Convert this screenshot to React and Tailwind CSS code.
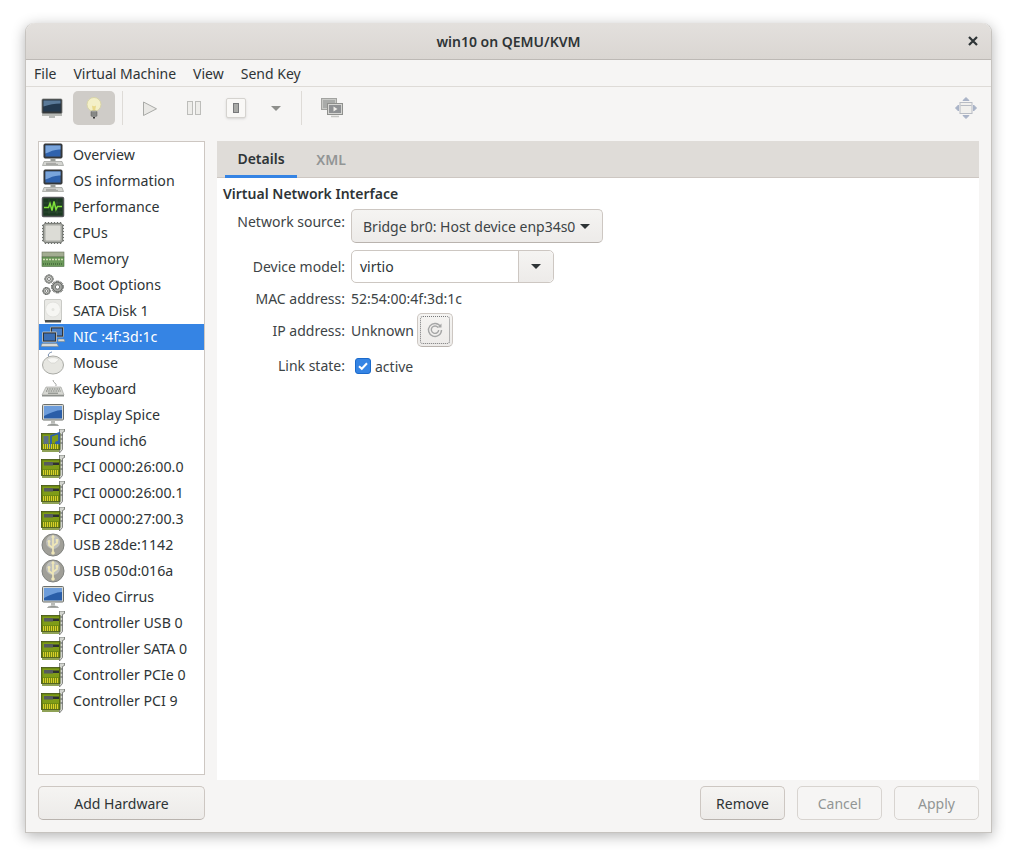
import React from "react";

const FONT = "font-['Noto_Sans','Open_Sans',sans-serif]";

// --- device icons, all drawn on a 24x24 box ---
function MonitorIcon({ stand = "#d5d6d2", screen = "#2f62ad" }) {
  return (
    <svg width="24" height="24" viewBox="0 0 24 24">
      <rect x="3" y="1" width="18" height="14" rx="1" fill="#3d4144" stroke="#2c2f31" />
      <rect x="4.5" y="2.5" width="15" height="11" fill={screen} />
      <path d="M4.5 2.5h15v4C14 6 9.5 8.5 4.5 10.5z" fill="#7aa5dc" />
      <rect x="9.5" y="15.5" width="5" height="2.5" fill="#9a9d99" />
      <path d="M3 18.5h18l1.5 4h-21z" fill={stand} stroke="#8b8e8a" strokeWidth="0.6" />
      <path d="M5 20.3h10M5 21.4h12" stroke="#7d807c" strokeWidth="0.6" />
    </svg>
  );
}

function DisplayIcon() {
  return (
    <svg width="24" height="24" viewBox="0 0 24 24">
      <rect x="1.5" y="1.5" width="21" height="15.5" rx="1" fill="#d6d8d4" stroke="#6d706c" />
      <rect x="3" y="3" width="18" height="12.5" fill="#2a5ea8" />
      <path d="M3 3h18v4C15 7 9 10 3 13z" fill="#6d9ddb" />
      <rect x="10" y="17" width="4" height="3.5" fill="#b9bbb7" />
      <path d="M6.5 22.5c1-2 10-2 11 0z" fill="#9fa29e" stroke="#7d807c" strokeWidth="0.5" />
    </svg>
  );
}

function PerfIcon() {
  return (
    <svg width="24" height="24" viewBox="0 0 24 24">
      <rect x="1.5" y="2.5" width="21" height="19" rx="1" fill="#1c3a22" stroke="#55585a" strokeWidth="1.5" />
      <path d="M3 8h18M3 17h18M8 4v15M16 4v15" stroke="#3c5a42" strokeWidth="0.5" />
      <path d="M3 12.5h4.5l1.5-4 2 7 2-9 2 8 1.5-3h4.5" fill="none" stroke="#7fe03a" strokeWidth="1.5" />
    </svg>
  );
}

function CpuIcon() {
  const pins = [5, 8, 11, 14, 17, 20];
  return (
    <svg width="24" height="24" viewBox="0 0 24 24">
      {pins.map((p) => (
        <g key={p} stroke="#6c6f6b" strokeWidth="1.4">
          <path d={`M${p - 0.5} 1v3`} />
          <path d={`M${p - 0.5} 20v3`} />
          <path d={`M1 ${p - 0.5}h3`} />
          <path d={`M20 ${p - 0.5}h3`} />
        </g>
      ))}
      <rect x="2.5" y="2.5" width="19" height="19" rx="2" fill="#a8aaa4" stroke="#7c7f7a" />
      <rect x="4.5" y="4.5" width="15" height="15" rx="1" fill="#dcdcd6" />
    </svg>
  );
}

function MemoryIcon() {
  return (
    <svg width="24" height="24" viewBox="0 0 24 24">
      <rect x="1" y="5" width="22" height="5" fill="#a3ad92" stroke="#6d7560" strokeWidth="0.6" />
      <rect x="1" y="10" width="22" height="9.5" fill="#6c9a5a" stroke="#4c6b41" strokeWidth="0.6" />
      <path d="M2 12.5h20" stroke="#d2dfb8" strokeWidth="1.6" strokeDasharray="2 1" />
      <path d="M2 17h20" stroke="#2f4d2a" strokeWidth="1.2" strokeDasharray="1 1" />
    </svg>
  );
}

function Gear({ cx, cy, r, fill }) {
  const teeth = [0, 45, 90, 135];
  return (
    <g>
      {teeth.map((a) => (
        <rect
          key={a}
          x={cx - r * 0.32}
          y={cy - r * 1.25}
          width={r * 0.64}
          height={r * 2.5}
          fill={fill}
          stroke="#4f5250"
          strokeWidth="0.5"
          transform={`rotate(${a} ${cx} ${cy})`}
        />
      ))}
      <circle cx={cx} cy={cy} r={r} fill={fill} stroke="#4f5250" strokeWidth="0.7" />
      <circle cx={cx} cy={cy} r={r * 0.45} fill="#fff" stroke="#4f5250" strokeWidth="0.7" />
    </g>
  );
}

function GearsIcon() {
  return (
    <svg width="24" height="24" viewBox="0 0 24 24">
      <Gear cx={8} cy={6} r={3.4} fill="#d7d8d3" />
      <Gear cx={5.5} cy={18} r={3} fill="#d7d8d3" />
      <Gear cx={16.5} cy={14} r={4.8} fill="#a6a8a4" />
    </svg>
  );
}

function DiskIcon() {
  return (
    <svg width="24" height="24" viewBox="0 0 24 24">
      <rect x="3.5" y="0.5" width="17" height="22" rx="1.5" fill="#e9e9e5" stroke="#c9cac6" />
      <circle cx="12" cy="10.5" r="7.5" fill="#f6f6f3" stroke="#e2e2de" />
      <circle cx="12" cy="10.5" r="1.5" fill="#e4e5e0" />
      <rect x="4" y="21" width="16" height="2.5" fill="#4b4e4c" />
    </svg>
  );
}

function NicIcon() {
  return (
    <svg width="24" height="24" viewBox="0 0 24 24">
      <rect x="9.5" y="2" width="13" height="10" rx="0.5" fill="#2f3336" stroke="#b5b8b4" strokeWidth="0.8" />
      <rect x="11" y="3.5" width="10" height="7" fill="#4b7fc4" />
      <rect x="1.5" y="7" width="14" height="10" rx="0.5" fill="#2f3336" stroke="#cfd1cd" strokeWidth="0.8" />
      <rect x="3" y="8.5" width="11" height="7" fill="#3b6fb5" />
      <path d="M1 18.5h15l1.5 3H0z" fill="#d9dad6" stroke="#7d807c" strokeWidth="0.5" />
      <path d="M17 14h6l1 2.5h-7z" fill="#d9dad6" stroke="#7d807c" strokeWidth="0.5" />
    </svg>
  );
}

function MouseIcon() {
  return (
    <svg width="24" height="24" viewBox="0 0 24 24">
      <path d="M8 6C6 3 9 1.5 11 1" fill="none" stroke="#6f86a8" strokeWidth="1" />
      <ellipse cx="12" cy="14" rx="10.5" ry="9" fill="#e6e6e1" stroke="#a9aaa5" />
      <path d="M6 8.5c3-2.5 9-2.5 12 0l-4 3.5h-4z" fill="#f7f7f4" stroke="#c6c7c2" strokeWidth="0.5" />
    </svg>
  );
}

function KeyboardIcon() {
  return (
    <svg width="24" height="24" viewBox="0 0 24 24">
      <path d="M15 9c1-3-3-3-3-6" fill="none" stroke="#8a8d89" strokeWidth="0.8" />
      <path d="M5 10h15l3 8H1z" fill="#d6d7d2" stroke="#9a9c98" strokeWidth="0.6" />
      <path d="M6 12h13M5 14h15" stroke="#6c6f6b" strokeWidth="1.2" strokeDasharray="1 0.7" />
      <path d="M1 18h22v1.5H1z" fill="#8d908c" />
      <path d="M7 16.2h10" stroke="#7d807c" strokeWidth="1" />
    </svg>
  );
}

function PciIcon({ sound = false }) {
  return (
    <svg width="24" height="24" viewBox="0 0 24 24">
      <path d="M18.5 0h5v2.5l-2 1v17l-3 3.5z" fill="#d3d5d0" stroke="#6c6f6b" strokeWidth="0.8" />
      <path d="M19.5 6h2M19.5 10h2M19.5 14h2" stroke="#55585a" strokeWidth="1.2" />
      <rect x="0.5" y="4.5" width="18.5" height="16" fill="#5f7a0e" stroke="#3f500b" strokeWidth="0.8" />
      <rect x="1.5" y="5.5" width="16.5" height="9" fill="#7f9c18" />
      {sound ? (
        <g>
          <rect x="2.5" y="7" width="5" height="8" fill="#5b6f86" />
          <path d="M10 17V7l8-3v10" fill="none" stroke="#2d5fb0" strokeWidth="1.8" />
          <ellipse cx="8.5" cy="17" rx="2.6" ry="2.1" fill="#2d5fb0" />
          <ellipse cx="16.5" cy="14" rx="2.6" ry="2.1" fill="#2d5fb0" />
        </g>
      ) : (
        <g>
          <rect x="3" y="7" width="9" height="3.5" fill="#565b5e" />
          <rect x="12" y="7.5" width="6" height="2.5" fill="#2e3133" />
        </g>
      )}
      <path d="M2 17.5h16" stroke="#d8cf2a" strokeWidth="4.8" strokeDasharray="1.2 0.8" />
      <path d="M1 22h17" stroke="#5f7a0e" strokeWidth="1.4" />
    </svg>
  );
}

function UsbIcon() {
  return (
    <svg width="24" height="24" viewBox="0 0 24 24">
      <circle cx="12" cy="12" r="11" fill="#a09f98" stroke="#80827e" />
      <circle cx="12" cy="9" r="7" fill="#bfc0bc" />
      <g fill="none" stroke="#efe7b8" strokeWidth="1.7">
        <path d="M12 4v15" />
        <path d="M12 15l-4-3V9" />
        <path d="M12 13l4-3V8" />
      </g>
      <path d="M12 1.5l2 3h-4z" fill="#efe7b8" />
      <circle cx="8" cy="8.5" r="1.4" fill="#efe7b8" />
      <rect x="14.7" y="6" width="2.6" height="2.6" fill="#efe7b8" />
      <circle cx="12" cy="20" r="1.8" fill="#efe7b8" />
    </svg>
  );
}

const devices = [
  { name: "Overview", icon: <MonitorIcon /> },
  { name: "OS information", icon: <MonitorIcon /> },
  { name: "Performance", icon: <PerfIcon /> },
  { name: "CPUs", icon: <CpuIcon /> },
  { name: "Memory", icon: <MemoryIcon /> },
  { name: "Boot Options", icon: <GearsIcon /> },
  { name: "SATA Disk 1", icon: <DiskIcon /> },
  { name: "NIC :4f:3d:1c", icon: <NicIcon />, selected: true },
  { name: "Mouse", icon: <MouseIcon /> },
  { name: "Keyboard", icon: <KeyboardIcon /> },
  { name: "Display Spice", icon: <DisplayIcon /> },
  { name: "Sound ich6", icon: <PciIcon sound /> },
  { name: "PCI 0000:26:00.0", icon: <PciIcon /> },
  { name: "PCI 0000:26:00.1", icon: <PciIcon /> },
  { name: "PCI 0000:27:00.3", icon: <PciIcon /> },
  { name: "USB 28de:1142", icon: <UsbIcon /> },
  { name: "USB 050d:016a", icon: <UsbIcon /> },
  { name: "Video Cirrus", icon: <DisplayIcon /> },
  { name: "Controller USB 0", icon: <PciIcon /> },
  { name: "Controller SATA 0", icon: <PciIcon /> },
  { name: "Controller PCIe 0", icon: <PciIcon /> },
  { name: "Controller PCI 9", icon: <PciIcon /> },
];

function Toolbar() {
  return (
    <div className="flex items-center h-[42px] shrink-0 pl-[7px] pr-[13px]">
      <div className="w-[38px] h-[34px] flex items-center justify-center">
        <svg width="24" height="24" viewBox="0 0 24 24">
          <rect x="2" y="3" width="20" height="14.5" rx="1" fill="#35393b" stroke="#777a78" strokeWidth="0.8" />
          <rect x="3.5" y="4.5" width="17" height="11" fill="#23394f" />
          <path d="M3.5 4.5h17v3c-6 0-11 1-17 3z" fill="#5a7a99" />
          <path d="M2 18h20v2H2z" fill="#b6b8b4" />
          <path d="M9 20.5h6v1H9z" fill="#777a78" />
        </svg>
      </div>
      <div className="w-[42px] h-[34px] ml-[2px] rounded-[5px] bg-[#cfccc8] flex items-center justify-center">
        <svg width="24" height="24" viewBox="0 0 24 24">
          <circle cx="12" cy="8.5" r="7" fill="#f4f0c8" stroke="#d8d4a8" />
          <path d="M10 9.5c1 1 3 1 4 0l-.8 5h-2.4z" fill="#e9d98a" />
          <rect x="9" y="15" width="6" height="5.5" rx="1" fill="#b5b7b3" stroke="#555" strokeWidth="0.5" />
          <path d="M9 17h6M9 19h6" stroke="#444" strokeWidth="0.8" />
          <path d="M11 21h2v1.5h-2z" fill="#333" />
        </svg>
      </div>
      <div className="w-px h-[34px] bg-[#dedbd7] ml-[7px]" />
      <div className="w-[40px] h-[34px] ml-[7px] flex items-center justify-center">
        <svg width="16" height="17" viewBox="0 0 16 17">
          <path d="M1.5 2v13.5L14.5 8.8z" fill="#e9e8e5" stroke="#a9aaa7" />
        </svg>
      </div>
      <div className="w-[40px] h-[34px] ml-[4px] flex items-center justify-center">
        <svg width="15" height="14" viewBox="0 0 15 14">
          <rect x="0.5" y="0.5" width="5" height="13" fill="#eeedea" stroke="#bdbdba" />
          <rect x="8.5" y="0.5" width="5" height="13" fill="#eeedea" stroke="#bdbdba" />
        </svg>
      </div>
      <div className="w-[40px] h-[34px] ml-[2px] flex items-center justify-center">
        <div className="w-[20px] h-[20px] rounded-[2px] border border-[#d5d3cf] bg-[#f9f8f6] shadow-sm flex items-center justify-center">
          <div className="w-[6px] h-[10px] bg-[#a9aaa7] border border-[#77787a]" />
        </div>
      </div>
      <div className="w-[36px] h-[34px] ml-[2px] flex items-center justify-center">
        <div className="w-0 h-0 border-x-[5px] border-x-transparent border-t-[5px] border-t-[#8e8f8c]" />
      </div>
      <div className="w-px h-[34px] bg-[#dedbd7] ml-[7px]" />
      <div className="w-[40px] h-[34px] ml-[10px] flex items-center justify-center">
        <svg width="24" height="24" viewBox="0 0 24 24">
          <rect x="1.5" y="2.5" width="15" height="11" fill="#c8c9c6" stroke="#a2a3a0" />
          <rect x="3" y="4" width="12" height="8" fill="#a9aba9" />
          <rect x="7.5" y="7.5" width="15" height="11" fill="#d5d5d2" stroke="#8f908d" />
          <rect x="9" y="9" width="12" height="8" fill="#8f9193" />
          <path d="M13.5 10.5v5l4-2.5z" fill="#eceae6" />
          <path d="M11 20.5h8" stroke="#c4c5c2" strokeWidth="1.5" />
        </svg>
      </div>
      <div className="ml-auto w-[24px] h-[24px] flex items-center justify-center">
        <svg width="24" height="24" viewBox="0 0 24 24">
          <rect x="6" y="6.5" width="12" height="11" fill="#f1f0ed" stroke="#b8bcc4" />
          <path d="M6.5 9.5h11" stroke="#b8bcc4" />
          <path d="M9 4.5L12 1.5l3 3zM9 19.5l3 3 3-3zM4.5 9l-3 3 3 3zM19.5 9l3 3-3 3z" fill="#a9b3c7" stroke="#a9b3c7" strokeLinejoin="round" />
        </svg>
      </div>
    </div>
  );
}

function Sidebar() {
  return (
    <div className="w-[167px] flex flex-col shrink-0">
      <div className="h-[634px] border border-[#cdc7c2] bg-white">
        {devices.map((d) => (
          <div
            key={d.name}
            className={`h-[26px] flex items-center ${d.selected ? "bg-[#3584e4] text-white" : "text-[#2e3436]"}`}
          >
            <div className="w-[24px] h-[24px] ml-[2px] shrink-0">{d.icon}</div>
            <span className="ml-[8px] whitespace-nowrap text-[14.2px] pb-[1px]">{d.name}</span>
          </div>
        ))}
      </div>
      <button className="mt-[11px] h-[34px] rounded-[5px] border border-[#cdc7c2] border-b-[#b9b3ae] bg-gradient-to-b from-[#f5f4f2] to-[#edebe9] text-[#2e3436]">
        Add Hardware
      </button>
    </div>
  );
}

function Arrow() {
  return <div className="w-0 h-0 border-x-[5px] border-x-transparent border-t-[5px] border-t-[#2e3436]" />;
}

function DetailsForm() {
  const label = "text-right text-[#3d4446] whitespace-nowrap";
  return (
    <div className="flex-1 bg-white px-[6px] pt-[4px]">
      <div className="font-semibold text-[#2e3436] leading-[24px]">Virtual Network Interface</div>
      <div className="grid grid-cols-[122px_auto] justify-start gap-x-[6px] mt-[3px] text-[#3d4446]">
        <div className={`${label} leading-[26px]`}>Network source:</div>
        <button className="w-[252px] h-[34px] rounded-[5px] border border-[#cdc7c2] border-b-[#b9b3ae] bg-gradient-to-b from-[#f5f4f2] to-[#edebe9] flex items-center justify-between pl-[11px] pr-[12px]">
          <span className="whitespace-nowrap">Bridge br0: Host device enp34s0</span>
          <Arrow />
        </button>

        <div className={`${label} mt-[7px] leading-[33px]`}>Device model:</div>
        <div className="mt-[7px] w-[203px] h-[33px] rounded-[5px] border border-[#cdc7c2] bg-white flex text-[#2e3436]">
          <div className="flex-1 pl-[8px] leading-[31px]">virtio</div>
          <div className="w-[35px] border-l border-[#cdc7c2] rounded-r-[5px] bg-gradient-to-b from-[#f5f4f2] to-[#edebe9] flex items-center justify-center">
            <Arrow />
          </div>
        </div>

        <div className={`${label} mt-[4px] leading-[24px]`}>MAC address:</div>
        <div className="mt-[4px] leading-[24px]">52:54:00:4f:3d:1c</div>

        <div className={`${label} mt-[2px] pt-[1px] leading-[34px]`}>IP address:</div>
        <div className="mt-[2px] flex items-start">
          <span className="pt-[1px] leading-[34px]">Unknown</span>
          <button className="ml-[3px] w-[36px] h-[34px] rounded-[5px] border border-[#cdc7c2] border-b-[#b9b3ae] bg-gradient-to-b from-[#f5f4f2] to-[#edebe9] p-[2px]">
            <span className="w-full h-full border border-dotted border-[#77787a] rounded-[3px] flex items-center justify-center">
              <svg width="16" height="16" viewBox="0 0 16 16" fill="none" stroke="#a5a6a6" strokeWidth="1.4">
                <path d="M13.5 4.5A6.5 6.5 0 1 0 14.5 8" />
                <path d="M11 5.5A3.7 3.7 0 1 0 11.7 8" />
                <path d="M14.5 1.5v4h-4z" fill="#a5a6a6" stroke="none" />
              </svg>
            </span>
          </button>
        </div>

        <div className={`${label} mt-[6px] leading-[24px]`}>Link state:</div>
        <div className="mt-[6px] flex items-center pl-[4px] h-[24px]">
          <span className="w-[16px] h-[16px] rounded-[3px] bg-[#3584e4] border border-[#1b6acb] flex items-center justify-center">
            <svg width="12" height="12" viewBox="0 0 12 12" fill="none" stroke="#fff" strokeWidth="2">
              <path d="M2 6.2l2.8 2.6L10 3.2" />
            </svg>
          </span>
          <span className="ml-[4px]">active</span>
        </div>
      </div>
    </div>
  );
}

function ActionButton({ children, disabled }) {
  return (
    <button
      className={`w-[85px] h-[34px] rounded-[5px] border ${
        disabled
          ? "border-[#d8d4d0] bg-[#f6f5f4] text-[#929595]"
          : "border-[#cdc7c2] border-b-[#b9b3ae] bg-gradient-to-b from-[#f5f4f2] to-[#edebe9] text-[#2e3436]"
      }`}
    >
      {children}
    </button>
  );
}

export default function App() {
  return (
    <div className={`w-[1017px] h-[861px] bg-white pt-[23px] pl-[25px] overflow-hidden text-[14px] ${FONT}`}>
      <div className="w-[967px] h-[810px] bg-[#f6f5f4] rounded-t-[9px] shadow-[0_3px_14px_rgba(0,0,0,0.3)] border border-t-0 border-[#c6c3bf] flex flex-col">
        <div className="h-[37px] shrink-0 rounded-t-[9px] bg-gradient-to-b from-[#e3e0dd] to-[#dad6d2] border-b border-[#bdb9b5] flex items-center relative text-[#2e3436]">
          <span className="flex-1 text-center font-semibold">win10 on QEMU/KVM</span>
          <svg className="absolute right-[13px] top-[13px]" width="10" height="10" viewBox="0 0 10 10" stroke="#2e3436" strokeWidth="2.2">
            <path d="M1 1l8 8M9 1l-8 8" />
          </svg>
        </div>

        <div className="h-[27px] shrink-0 border-b border-[#dedbd7] flex items-center pl-[8px] gap-[17px] text-[#2e3436]">
          <span>File</span>
          <span>Virtual Machine</span>
          <span>View</span>
          <span>Send Key</span>
        </div>

        <Toolbar />

        <div className="flex-1 flex gap-[12px] px-[12px] pt-[12px] pb-[12px] min-h-0">
          <Sidebar />
          <div className="flex-1 flex flex-col">
            <div className="h-[37px] shrink-0 bg-[#dfdcd8] border-b border-[#cdc7c2] flex pl-[8px]">
              <div className="w-[72px] h-[37px] border-b-[3px] border-[#3584e4] flex items-center justify-center font-semibold text-[#2e3436]">
                Details
              </div>
              <div className="w-[68px] flex items-center justify-center font-semibold text-[#929595]">XML</div>
            </div>
            <DetailsForm />
            <div className="h-[40px] shrink-0 flex justify-end items-end gap-[12px]">
              <ActionButton>Remove</ActionButton>
              <ActionButton disabled>Cancel</ActionButton>
              <ActionButton disabled>Apply</ActionButton>
            </div>
          </div>
        </div>
      </div>
    </div>
  );
}
